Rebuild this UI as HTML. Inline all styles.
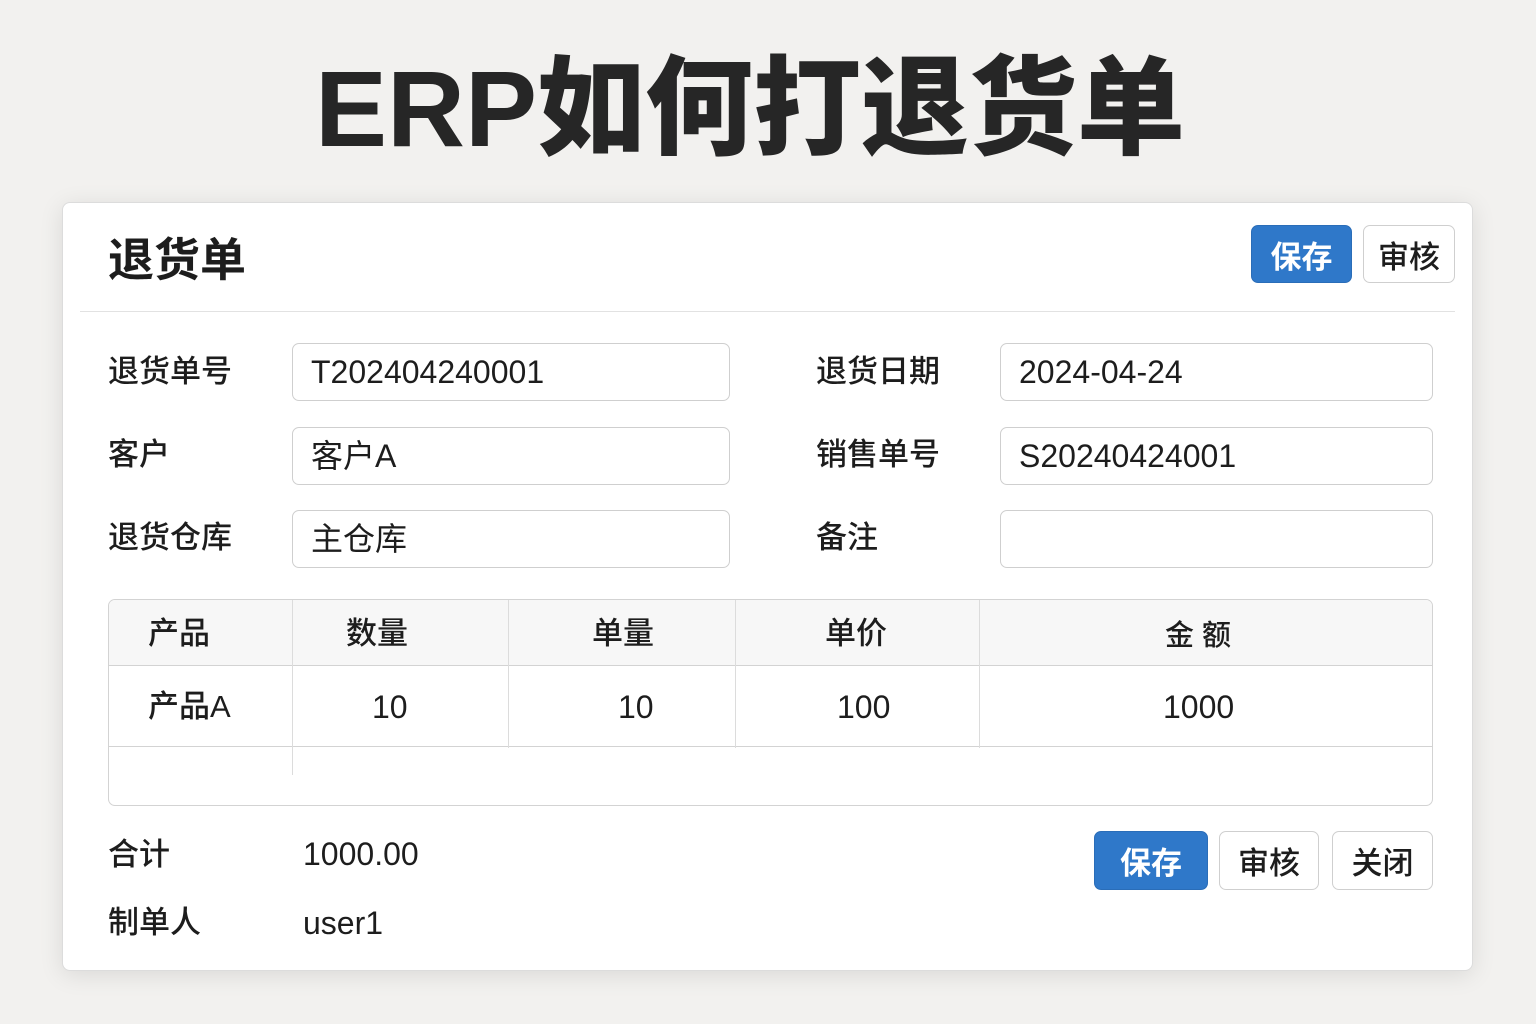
<!DOCTYPE html>
<html><head><meta charset="utf-8"><style>
*{margin:0;padding:0;box-sizing:border-box}
body{width:1536px;height:1024px;background:#f2f1ef;font-family:"Liberation Sans","Noto Sans CJK SC",sans-serif;color:#1d1d1d;position:relative;overflow:hidden}
.a{position:absolute;white-space:nowrap}
h1{position:absolute;left:0;width:1500px;text-align:center;top:44px;font-size:108px;font-weight:900;color:#262626;letter-spacing:0px;line-height:130px}
.card{position:absolute;left:62px;top:202px;width:1411px;height:769px;background:#fff;border:1px solid #dcdcdc;border-radius:8px;box-shadow:0 4px 24px rgba(0,0,0,.10)}
.btn{position:absolute;border:1px solid #cfcfcf;border-radius:7px;background:#fff;font-size:31px;display:flex;align-items:center;justify-content:center;color:#1d1d1d;font-weight:500}
.btn.p{background:#2f78c9;border-color:#2a6db8;color:#fff;font-weight:700}
.lbl{position:absolute;font-size:31px;font-weight:500;line-height:40px;color:#1d1d1d}
.inp{position:absolute;border:1px solid #cfcfcf;border-radius:7px;background:#fff;font-size:32px;line-height:56px;padding-left:18px}
.tb{position:absolute;left:108px;top:599px;width:1325px;height:207px;border:1px solid #d3d3d3;border-radius:7px;overflow:hidden}
.c{position:absolute;font-size:31px;line-height:40px;font-weight:500}
</style></head><body>
<h1>ERP如何打退货单</h1>
<div class="card"></div>
<div class="a" style="left:108px;top:232px;font-size:46px;font-weight:700;line-height:56px">退货单</div>
<div class="a" style="left:80px;top:311px;width:1375px;height:1px;background:#e2e2e2"></div>
<div class="btn p" style="left:1251px;top:225px;width:101px;height:58px">保存</div>
<div class="btn" style="left:1363px;top:225px;width:92px;height:58px">审核</div>

<div class="lbl" style="left:108px;top:352px">退货单号</div>
<div class="lbl" style="left:108px;top:435px">客户</div>
<div class="lbl" style="left:108px;top:518px">退货仓库</div>
<div class="lbl" style="left:816px;top:352px">退货日期</div>
<div class="lbl" style="left:816px;top:435px">销售单号</div>
<div class="lbl" style="left:816px;top:518px">备注</div>
<div class="inp" style="left:292px;top:343px;width:438px;height:58px">T202404240001</div>
<div class="inp" style="left:292px;top:427px;width:438px;height:58px">客户A</div>
<div class="inp" style="left:292px;top:510px;width:438px;height:58px">主仓库</div>
<div class="inp" style="left:1000px;top:343px;width:433px;height:58px">2024-04-24</div>
<div class="inp" style="left:1000px;top:427px;width:433px;height:58px">S20240424001</div>
<div class="inp" style="left:1000px;top:510px;width:433px;height:58px"></div>

<div class="tb">
 <div class="a" style="left:0;top:0;width:100%;height:66px;background:#f7f7f7;border-bottom:1px solid #d3d3d3"></div>
 <div class="a" style="left:0;top:146px;width:100%;height:1px;background:#d3d3d3"></div>
 <div class="a" style="left:183px;top:0;width:1px;height:175px;background:#dcdcdc"></div>
 <div class="a" style="left:399px;top:0;width:1px;height:148px;background:#dcdcdc"></div>
 <div class="a" style="left:626px;top:0;width:1px;height:148px;background:#dcdcdc"></div>
 <div class="a" style="left:870px;top:0;width:1px;height:148px;background:#dcdcdc"></div>
</div>
<div class="c" style="left:148px;top:614px">产品</div>
<div class="c" style="left:346px;top:614px">数量</div>
<div class="c" style="left:592px;top:614px">单量</div>
<div class="c" style="left:825px;top:614px">单价</div>
<div class="c" style="left:1165px;top:616px;font-size:29px">金 额</div>
<div class="c" style="left:148px;top:687px">产品A</div>
<div class="c" style="left:372px;top:687px;font-size:32px;font-weight:400">10</div>
<div class="c" style="left:618px;top:687px;font-size:32px;font-weight:400">10</div>
<div class="c" style="left:837px;top:687px;font-size:32px;font-weight:400">100</div>
<div class="c" style="left:1163px;top:687px;font-size:32px;font-weight:400">1000</div>

<div class="c" style="left:108px;top:835px">合计</div>
<div class="c" style="left:303px;top:834px;font-size:32px;font-weight:400">1000.00</div>
<div class="c" style="left:108px;top:903px">制单人</div>
<div class="c" style="left:303px;top:903px;font-size:32px;font-weight:400">user1</div>
<div class="btn p" style="left:1094px;top:831px;width:114px;height:59px">保存</div>
<div class="btn" style="left:1219px;top:831px;width:100px;height:59px">审核</div>
<div class="btn" style="left:1332px;top:831px;width:101px;height:59px">关闭</div>
</body></html>
